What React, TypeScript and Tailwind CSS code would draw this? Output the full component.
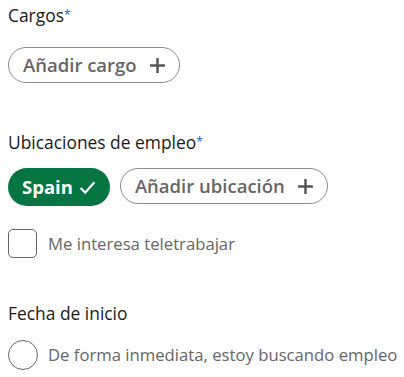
import React from 'react';

const font = { fontFamily: '"Open Sans", "Noto Sans", Arial, sans-serif' };

const Label: React.FC<{ text: string; required?: boolean }> = ({ text, required }) => (
	<p className="text-[17.4px] leading-[20px] text-[#191919]">
		{text}
		{required && <span className="text-[#0a66c2] text-[12px] align-top">*</span>}
	</p>
);

const PlusIcon = () => (
	<svg width="17" height="17" viewBox="0 0 16 16" className="ml-[12px]">
		<path d="M8 1v14M1 8h14" stroke="#555" strokeWidth="2.3" />
	</svg>
);

const AddPill: React.FC<{ text: string }> = ({ text }) => (
	<button className="flex items-center h-[36px] pl-[14px] pr-[13px] rounded-full border border-[#8c8c8c] text-[#666] text-[18.5px] font-semibold bg-white">
		{text}
		<PlusIcon />
	</button>
);

export default function App() {
	return (
		<div className="w-[404px] h-[377px] bg-white pl-[8px] pt-[5px]" style={font}>
			<Label text="Cargos" required />
			<div className="mt-[22px] flex">
				<AddPill text="Añadir cargo" />
			</div>

			<div className="mt-[49px]">
				<Label text="Ubicaciones de empleo" required />
			</div>
			<div className="mt-[16px] flex gap-[10px]">
				<button className="flex items-center h-[38px] pl-[14px] pr-[14px] rounded-full bg-[#057642] text-white text-[18.5px] font-bold">
					Spain
					<svg width="17" height="17" viewBox="0 0 16 16" className="ml-[6px]">
						<path d="M1.5 8.5l4.3 4.3L14.5 3" stroke="white" strokeWidth="2" fill="none" />
					</svg>
				</button>
				<AddPill text="Añadir ubicación" />
			</div>

			<label className="mt-[23px] flex items-center gap-[11px]">
				<span className="w-[29px] h-[29px] rounded-[5px] border border-[#666] bg-white" />
				<span className="text-[16.7px] text-[#666]">Me interesa teletrabajar</span>
			</label>

			<div className="mt-[45px]">
				<Label text="Fecha de inicio" />
			</div>
			<label className="mt-[17px] flex items-center gap-[10px]">
				<span className="w-[30px] h-[30px] rounded-full border border-[#666] bg-white" />
				<span className="text-[16.7px] text-[#666]">De forma inmediata, estoy buscando empleo</span>
			</label>
		</div>
	);
}
